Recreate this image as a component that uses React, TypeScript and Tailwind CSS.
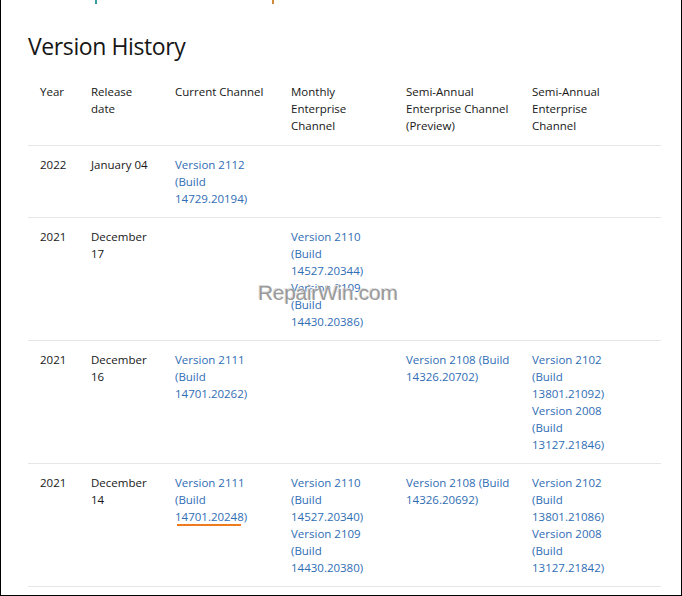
import React from "react";

type Cell = string[][];
const rows: { year: string; date: string[]; cells: Cell[] }[] = [
  { year: "2022", date: ["January 04"], cells: [[["Version 2112", "(Build", "14729.20194)"]], [], [], []] },
  { year: "2021", date: ["December", "17"], cells: [[], [["Version 2110", "(Build", "14527.20344)"], ["Version 2109", "(Build", "14430.20386)"]], [], []] },
  { year: "2021", date: ["December", "16"], cells: [[["Version 2111", "(Build", "14701.20262)"]], [], [["Version 2108 (Build", "14326.20702)"]], [["Version 2102", "(Build", "13801.21092)"], ["Version 2008", "(Build", "13127.21846)"]]] },
  { year: "2021", date: ["December", "14"], cells: [[["Version 2111", "(Build", "14701.20248)"]], [["Version 2110", "(Build", "14527.20340)"], ["Version 2109", "(Build", "14430.20380)"]], [["Version 2108 (Build", "14326.20692)"]], [["Version 2102", "(Build", "13801.21086)"], ["Version 2008", "(Build", "13127.21842)"]]] },
];

const cols = "grid grid-cols-[51px_84px_116px_115px_126px_141px]";
const Lines = ({ l }: { l: string[] }) => (
  <div>{l.map((s, i) => <div key={i} className="whitespace-nowrap">{s}</div>)}</div>
);

export default function App() {
  return (
    <div className="relative w-[682px] h-[596px] bg-white border-x border-b border-black overflow-hidden text-[11.5px] leading-[17px] text-[#171717]" style={{ fontFamily: "'Open Sans', 'Noto Sans', sans-serif" }}>
      <div className="absolute left-[94px] top-0 w-[2px] h-[4px] bg-[#3a9aa0]" />
      <div className="absolute left-[271px] top-0 w-[2px] h-[4px] bg-[#d08a3a]" />
      <div className="pl-[27px] pt-[31px]">
        <h1 className="text-[23px] leading-[30px] font-medium text-[#161616] tracking-[-0.4px]">Version History</h1>
        <div className="w-[633px] mt-[22px]">
          <div className={`${cols} border-b border-[#e6e6e6] pb-[11px]`}>
            {[["Year"], ["Release", "date"], ["Current Channel"], ["Monthly", "Enterprise", "Channel"], ["Semi-Annual", "Enterprise Channel", "(Preview)"], ["Semi-Annual", "Enterprise", "Channel"]].map((h, i) => (
              <div key={i} className="pl-[12px] font-medium"><Lines l={h} /></div>
            ))}
          </div>
          {rows.map((r, ri) => (
            <div key={ri} className={`${cols} border-b border-[#e6e6e6] py-[10px]`}>
              <div className="pl-[12px]">{r.year}</div>
              <div className="pl-[12px]"><Lines l={r.date} /></div>
              {r.cells.map((c, ci) => (
                <div key={ci} className="pl-[12px] text-[#2f6db5]">
                  {c.map((l, li) => (
                    <div key={li} className="relative">
                      <Lines l={l} />
                      {ri === 3 && ci === 0 && <div className="absolute left-[2px] top-[50px] w-[64px] h-[2px] bg-[#f07b1f]" />}
                    </div>
                  ))}
                </div>
              ))}
            </div>
          ))}
        </div>
      </div>
      <div className="absolute left-[257px] top-[284px] text-[21px] text-[#9a9a9a] tracking-[-0.3px]" style={{ fontFamily: "'Liberation Sans', sans-serif", textShadow: "1px 1px 0 #fff, -1px -1px 0 #ddd" }}>RepairWin.com</div>
    </div>
  );
}
